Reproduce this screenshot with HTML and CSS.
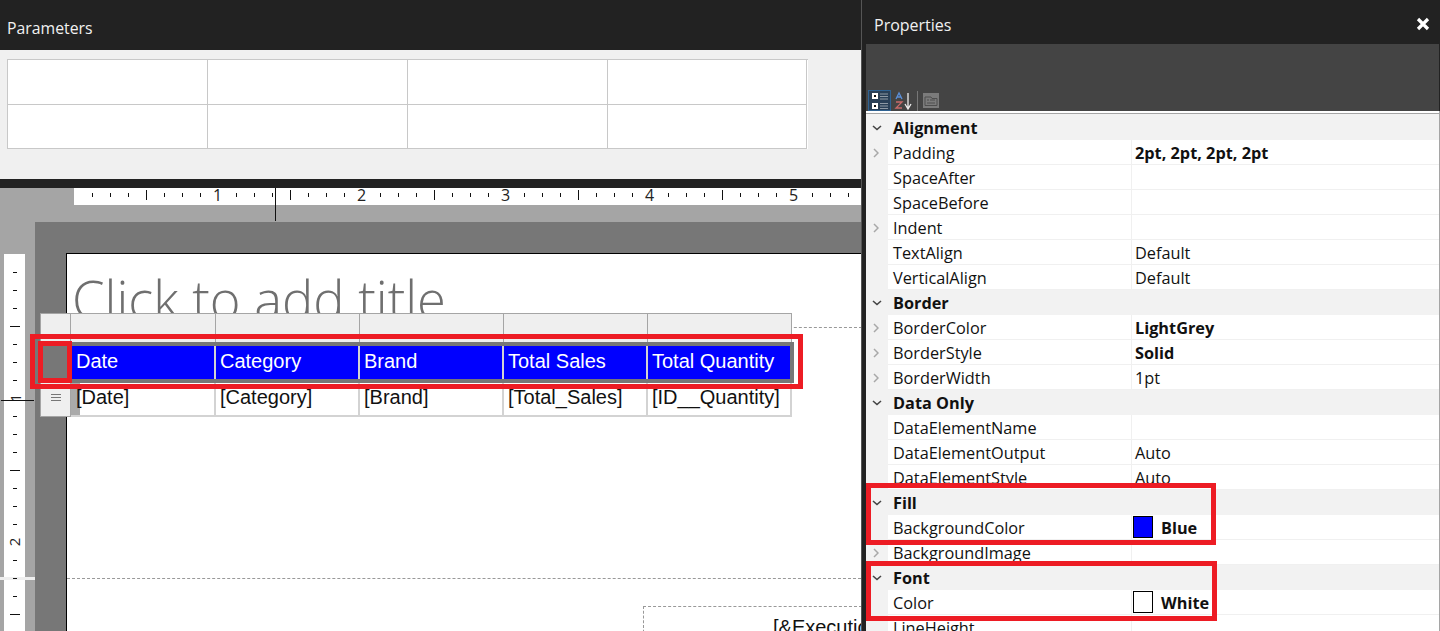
FILE: index.html
```html
<!DOCTYPE html>
<html lang="en">
<head>
    <meta charset="UTF-8">
    <title>Report Builder</title>
    <link rel="stylesheet" href="styles.css">
</head>
<body>
<div class="app">
    <div class="left-pane">
        <div class="pane-title">Parameters</div>
        <div class="param-area">
            <div class="param-grid">
                <div></div><div></div><div></div><div></div>
                <div></div><div></div><div></div><div></div>
            </div>
        </div>
        <div class="dark-bar"></div>
        <div class="design-area">
            <div class="h-ruler">
                <span class="h-num n1">1</span><span class="h-num n2">2</span><span class="h-num n3">3</span><span class="h-num n4">4</span><span class="h-num n5">5</span>
            </div>
            <div class="h-marker"></div>
            <div class="v-ruler">
                <span class="v-num n1">1</span><span class="v-num n2">2</span>
                <div class="v-gap"></div>
            </div>
            <div class="page-surround">
                <div class="page">
                    <div class="title-box"><div class="title-text">Click to add title</div></div>
                    <div class="exec-box">[&amp;ExecutionTime]</div>
                </div>
            </div>
            <div class="v-marker"></div>
            <div class="tablix">
                <div class="corner"></div>
                <div class="col-handle"></div><div class="col-handle"></div><div class="col-handle"></div><div class="col-handle"></div><div class="col-handle"></div>
                <div class="row-select"></div>
                <div class="head-cells">
                    <div class="head-cell">Date</div>
                    <div class="head-cell">Category</div>
                    <div class="head-cell">Brand</div>
                    <div class="head-cell">Total Sales</div>
                    <div class="head-cell">Total Quantity</div>
                </div>
                <div class="row-handle"><span></span><span></span><span></span></div>
                <div class="data-cell first">[Date]</div>
                <div class="data-cell">[Category]</div>
                <div class="data-cell">[Brand]</div>
                <div class="data-cell">[Total_Sales]</div>
                <div class="data-cell">[ID__Quantity]</div>
            </div>
            <div class="mark mark-row"></div>
            <div class="mark mark-select"></div>
        </div>
    </div>

    <div class="props-pane">
        <div class="props-title">
            <span>Properties</span>
            <svg class="close-icon" width="14" height="14" viewBox="0 0 14 14"><path d="M2 2L12 12M12 2L2 12" stroke="#fff" stroke-width="3.200"/></svg>
        </div>
        <div class="props-toolbar">
            <div class="tool active">
                <svg width="22" height="20" viewBox="0 0 22 20">
                    <rect x="3" y="2" width="6" height="6" fill="#fff"/><rect x="5" y="4" width="2" height="2" fill="#111"/>
                    <rect x="3" y="12" width="6" height="6" fill="#fff"/><rect x="5" y="14" width="2" height="2" fill="#111"/>
                    <path d="M11 3h8M11 5.500h8M11 8h8M11 12.500h8M11 15h8M11 17.500h8" stroke="#8f9aa5" stroke-width="1"/>
                </svg>
            </div>
            <div class="tool">
                <svg width="20" height="20" viewBox="0 0 20 20">
                    <path d="M2 8L5 2L8 8M3 6h4" stroke="#5b8fd8" stroke-width="1.300" fill="none"/>
                    <path d="M2 11h6L2 17h6" stroke="#c96a6a" stroke-width="1.300" fill="none"/>
                    <path d="M14 2v15M11 13l3 5l3-5" stroke="#eee" stroke-width="1.300" fill="none"/>
                </svg>
            </div>
            <div class="tool-sep"></div>
            <div class="tool plain">
                <svg width="18" height="16" viewBox="0 0 18 16">
                    <rect x="0" y="0" width="16" height="15" fill="#7b7b7b"/>
                    <path d="M2 4h6l1 1.500h5v7H2z" fill="none" stroke="#4e4e4e"/>
                    <path d="M4 7h2M7 7h5M4 10h8" stroke="#4e4e4e"/>
                </svg>
            </div>
        </div>
        <div class="grid" id="grid"></div>
        <div class="mark mark-fill"></div>
        <div class="mark mark-font"></div>
    </div>
</div>
<script>
    const rows = [
        { group: 'Alignment' },
        { name: 'Padding', value: '2pt, 2pt, 2pt, 2pt', bold: true, more: true },
        { name: 'SpaceAfter' },
        { name: 'SpaceBefore' },
        { name: 'Indent', more: true },
        { name: 'TextAlign', value: 'Default' },
        { name: 'VerticalAlign', value: 'Default' },
        { group: 'Border' },
        { name: 'BorderColor', value: 'LightGrey', bold: true, more: true },
        { name: 'BorderStyle', value: 'Solid', bold: true, more: true },
        { name: 'BorderWidth', value: '1pt', more: true },
        { group: 'Data Only' },
        { name: 'DataElementName' },
        { name: 'DataElementOutput', value: 'Auto' },
        { name: 'DataElementStyle', value: 'Auto' },
        { group: 'Fill' },
        { name: 'BackgroundColor', value: 'Blue', bold: true, swatch: '#0000ff' },
        { name: 'BackgroundImage', more: true },
        { group: 'Font' },
        { name: 'Color', value: 'White', bold: true, swatch: '#ffffff' },
        { name: 'LineHeight' }
    ];

    const grid = document.getElementById('grid');

    rows.forEach(row => {
        const el = document.createElement('div');
        if (row.group) {
            el.className = 'group-row';
            el.innerHTML = `<svg class="chev" width="10" height="6" viewBox="0 0 10 6"><path d="M1 1l4 3.500L9 1" stroke="#444" stroke-width="1.600" fill="none"/></svg><span>${row.group}</span>`;
        } else {
            el.className = 'prop-row';
            const arrow = row.more ? '<svg width="6" height="10" viewBox="0 0 6 10"><path d="M1 1l4 4l-4 4" stroke="#a8a8a8" stroke-width="1.500" fill="none"/></svg>' : '';
            const swatch = row.swatch ? `<i class="swatch" style="background: ${row.swatch}"></i>` : '';
            el.innerHTML = `<div class="gutter">${arrow}</div><div class="prop-name">${row.name}</div><div class="prop-value${row.bold ? ' bold' : ''}">${swatch}${row.value || ''}</div>`;
        }
        grid.appendChild(el);
    });

    // ruler ticks are every 1/8 inch, 18px apart
    function addTicks(ruler, count, horizontal) {
        for (let i = 1; i <= count; i++) {
            if (i % 8 === 0) continue;
            const tick = document.createElement('i');
            tick.className = i % 4 === 0 ? 'tick major' : 'tick';
            tick.style[horizontal ? 'left' : 'top'] = (i * 18) + 'px';
            ruler.appendChild(tick);
        }
    }
    addTicks(document.querySelector('.h-ruler'), 47, true);
    addTicks(document.querySelector('.v-ruler'), 21, false);
</script>
</body>
</html>
```
FILE: styles.css
```css
html, body {
    margin: 0;
    height: 100%;
    overflow: hidden;
}
body {
    font-family: "Open Sans", "Noto Sans", sans-serif;
    background: #222;
}
.app {
    display: flex;
    width: 1440px;
    height: 631px;
}
.left-pane {
    width: 861px;
    flex: none;
    display: flex;
    flex-direction: column;
    overflow: hidden;
}
.pane-title {
    height: 50px;
    background: #222;
    color: #f1f1f1;
    font-size: 15.800px;
    line-height: 57px;
    padding-left: 7px;
    box-sizing: border-box;
}
.param-area {
    height: 129px;
    background: #f0f0f0;
    padding: 9px 0 0 7px;
    box-sizing: border-box;
}
.param-grid {
    display: grid;
    grid-template-columns: 200px 200px 200px 199px;
    grid-template-rows: 45px 44px;
    width: 800px;
    background: #fff;
    border-top: 1px solid #c8c8c8;
    border-left: 1px solid #c8c8c8;
}
.param-grid div {
    border-right: 1px solid #c8c8c8;
    border-bottom: 1px solid #c8c8c8;
}
.dark-bar {
    height: 9px;
    background: #222;
}
.design-area {
    position: relative;
    flex: 1;
    background: #a5a5a5;
    overflow: hidden;
}
.h-ruler {
    position: absolute;
    left: 74px;
    right: 0;
    top: 0;
    height: 17px;
    background: #fff;
    overflow: hidden;
}
.h-num {
    position: absolute;
    top: 0;
    font-size: 16px;
    line-height: 14px;
    color: #222;
}
.h-num.n1 { left: 139px; }
.h-num.n2 { left: 283px; }
.h-num.n3 { left: 427px; }
.h-num.n4 { left: 571px; }
.h-num.n5 { left: 715px; }
.h-ruler .tick {
    position: absolute;
    top: 5px;
    width: 1px;
    height: 4px;
    background: #111;
}
.h-ruler .tick.major {
    top: 2px;
    height: 10px;
}
.h-marker {
    position: absolute;
    left: 275px;
    top: 0;
    width: 1px;
    height: 33px;
    background: #111;
    z-index: 1;
}
.v-ruler {
    position: absolute;
    left: 4px;
    top: 66px;
    bottom: 0;
    width: 21px;
    background: #fff;
}
.v-ruler .tick {
    position: absolute;
    left: 9px;
    width: 4px;
    height: 1px;
    background: #111;
}
.v-ruler .tick.major {
    left: 6px;
    width: 10px;
}
.v-num {
    position: absolute;
    font-size: 15px;
    line-height: 16px;
    color: #222;
    transform: rotate(-90deg);
}
.v-num.n1 { top: 136px; left: 7px; }
.v-num.n2 { top: 280px; left: 6px; }
.v-gap {
    position: absolute;
    left: -4px;
    top: 323px;
    width: 35px;
    height: 3px;
    background: #efefef;
}
.v-marker {
    position: absolute;
    left: 1px;
    top: 212px;
    width: 33px;
    height: 1px;
    background: #111;
}
.page-surround {
    position: absolute;
    left: 35px;
    right: 0;
    top: 34px;
    bottom: 0;
    background: #777;
    padding: 31px 0 0 31px;
    box-sizing: border-box;
}
.page {
    position: relative;
    height: 100%;
    background: #fff;
    border-top: 1px solid #000;
    border-left: 1px solid #000;
}
.title-box {
    height: 73px;
    width: 794px;
    border-right: 1px dashed #999;
    border-bottom: 1px dashed #999;
    overflow: hidden;
}
.title-text {
    font-weight: 300;
    font-size: 52.500px;
    line-height: 74px;
    padding: 8px 0 0 5px;
    color: #6f6f6f;
    white-space: nowrap;
}
.page::after {
    content: "";
    position: absolute;
    left: 0;
    right: 0;
    top: 324px;
    border-top: 1px dashed #999;
}
.exec-box {
    position: absolute;
    left: 576px;
    top: 352px;
    width: 300px;
    height: 40px;
    border-top: 1px dashed #999;
    border-left: 1px dashed #999;
    font-family: "Liberation Sans", sans-serif;
    font-size: 20px;
    line-height: 40px;
    padding-left: 129px;
    color: #111;
    white-space: nowrap;
}
.tablix {
    position: absolute;
    left: 40px;
    top: 125px;
    width: 752px;
    display: grid;
    grid-template-columns: 31px 145px repeat(4, 144px);
    grid-template-rows: 29px 41px 34px;
    font-family: "Liberation Sans", sans-serif;
    font-size: 20px;
}
.corner, .col-handle {
    background: #efefef;
    border-top: 1px solid #a5a5a5;
    border-right: 1px solid #a5a5a5;
    box-sizing: border-box;
}
.corner {
    border-left: 1px solid #a5a5a5;
}
.row-select {
    background: #777;
    margin-left: 1px;
}
.head-cells {
    grid-column: 2 / 7;
    display: grid;
    grid-template-columns: 145px 144px 144px 144px 142px;
    background: #777;
    padding: 4px 0;
    margin-right: -2px;
}
.head-cell {
    background: #00f;
    color: #fff;
    border-right: 2px solid #d3d3d3;
    line-height: 31px;
    padding-left: 4px;
    box-sizing: border-box;
}
.head-cell:first-child {
    padding-left: 5px;
}
.head-cell:last-child {
    border-right: 0;
}
.row-handle {
    background: #efefef;
    border: 1px solid #a5a5a5;
    border-top: 0;
    box-sizing: border-box;
    display: flex;
    flex-direction: column;
    align-items: center;
    justify-content: center;
    gap: 2px;
    padding-bottom: 4px;
}
.row-handle span {
    width: 10px;
    height: 1px;
    background: #777;
}
.data-cell {
    background: #fff;
    color: #111;
    border-right: 2px solid #d3d3d3;
    border-bottom: 2px solid #d3d3d3;
    line-height: 28px;
    padding-left: 4px;
    box-sizing: border-box;
    white-space: nowrap;
}
.data-cell.first {
    padding-left: 5px;
    background: linear-gradient(to right, #aaa 9px, #fff 9px);
}
.mark {
    position: absolute;
    border: 5px solid #ed1c24;
    box-sizing: border-box;
    pointer-events: none;
}
.mark-row {
    left: 30px;
    top: 146px;
    width: 773px;
    height: 55px;
}
.mark-select {
    left: 38px;
    top: 153px;
    width: 34px;
    height: 42px;
}
.props-pane {
    position: relative;
    flex: 1;
    display: flex;
    flex-direction: column;
    border-left: 1px solid #555;
    background: #222;
}
.props-title {
    height: 41px;
    margin-top: 3px;
    flex: none;
    display: flex;
    align-items: center;
    justify-content: space-between;
    padding: 0 10px 0 12px;
    color: #f1f1f1;
    font-size: 16px;
    line-height: 24px;
    box-sizing: border-box;
}
.props-title span {
    padding-top: 2px;
}
.props-toolbar {
    height: 67px;
    flex: none;
    margin: 0 1px 0 4px;
    background: #444;
    display: flex;
    align-items: flex-end;
    gap: 1px;
    padding: 0 0 0 2px;
    box-sizing: border-box;
}
.tool {
    width: 23px;
    height: 21px;
    display: flex;
    align-items: center;
    justify-content: center;
}
.tool.plain {
    justify-content: flex-start;
}
.tool.active {
    background: #2a4057;
    outline: 1px solid #2f6292;
    outline-offset: -1px;
}
.tool-sep {
    width: 1px;
    height: 20px;
    background: #777;
    margin: 0 4px 0 1px;
}
.grid {
    flex: 1;
    margin-left: 4px;
    padding-top: 2px;
    background: #fff;
    font-size: 16.300px;
    overflow: hidden;
    color: #111;
    border-right: 1px solid #a5a5a5;
}
.group-row {
    height: 25px;
    background: #f2f2f2;
    display: flex;
    align-items: center;
    font-weight: 700;
    box-sizing: border-box;
}
.group-row:first-child {
    height: 27px;
    border-top: 1px solid #a5a5a5;
    padding-top: 2px;
}
.group-row .chev {
    margin-left: 6px;
    margin-right: 11px;
}
.prop-row {
    height: 25px;
    display: grid;
    grid-template-columns: 22px 244px 1fr;
    line-height: 22px;
}
.gutter {
    background: #f2f2f2;
    display: flex;
    align-items: center;
    padding-left: 7px;
}
.prop-name {
    padding: 2px 0 0 5px;
    border-bottom: 1px solid #f0f0f0;
    border-right: 1px solid #f0f0f0;
    white-space: nowrap;
}
.prop-value {
    padding: 2px 0 0 3px;
    border-bottom: 1px solid #f0f0f0;
    display: flex;
    align-items: center;
    white-space: nowrap;
}
.prop-value.bold {
    font-weight: 700;
}
.swatch {
    width: 20px;
    height: 22px;
    border: 1px solid #000;
    margin: -1px 8px 1px -2px;
    box-sizing: border-box;
}
.mark-fill {
    left: 4px;
    top: 483px;
    width: 350px;
    height: 62px;
}
.mark-font {
    left: 4px;
    top: 561px;
    width: 351px;
    height: 60px;
}
```
